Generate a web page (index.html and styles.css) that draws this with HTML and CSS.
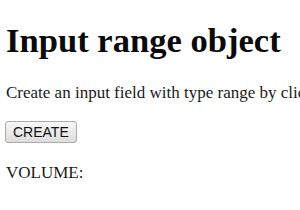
FILE: index.html
```html
<!DOCTYPE html>
<html>
<head>
    <meta charset="UTF-8">
    <title>Input range object</title>
    <link rel="stylesheet" href="styles.css">
</head>
<body>
    <h1 class="title">Input range object</h1>
    <p class="intro">Create an input field with type range by clicking the button.</p>
    <div class="actions">
        <button id="create-button" class="button">CREATE</button>
    </div>
    <p class="volume">VOLUME:</p>
</body>
</html>
```

FILE: styles.css
```css
body {
    font-family: "Liberation Serif", "Times New Roman", serif;
    margin: 0;
    padding: 8px 6px;
    background-color: #FFFFFF;
    color: #000000;
    overflow: hidden;
}
.title {
    font-size: 34.6px;
    line-height: 40px;
    font-weight: bold;
    color: #0A0A0A;
    margin: 12px 0 23px;
}
.intro {
    font-size: 17px;
    line-height: 20px;
    color: #1A1A1A;
    white-space: nowrap;
    margin: 0 0 18px;
}
.actions {
    display: flex;
}
.button {
    font-family: "Liberation Sans", Arial, sans-serif;
    font-size: 14px;
    line-height: 16px;
    padding: 2px 7px;
    margin-left: -1px;
    background: linear-gradient(#F7F7F7, #DDDDDD);
    border: 1px solid #ABABAB;
    border-radius: 3px;
    color: #111111;
}
.volume {
    font-size: 17px;
    line-height: 20px;
    color: #1A1A1A;
    margin: 20px 0 0;
}
```
